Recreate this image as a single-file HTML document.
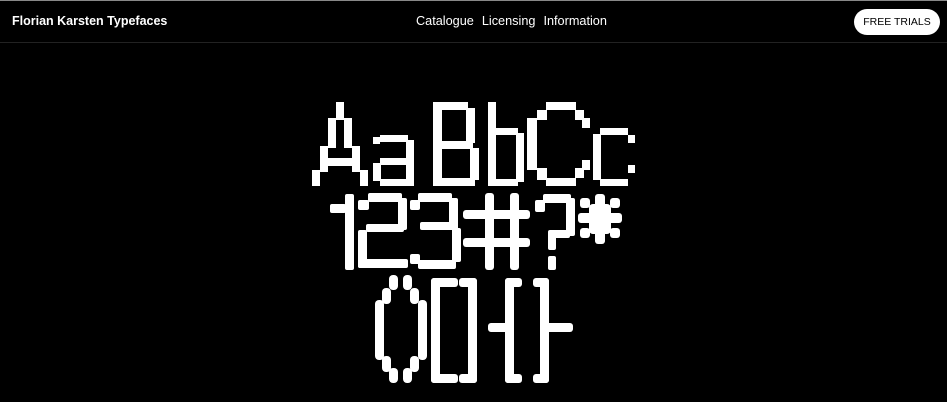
<!DOCTYPE html>
<html><head><style>
body{margin:0;width:947px;height:402px;background:#000;overflow:hidden;font-family:"Liberation Sans",sans-serif;color:#fff;position:relative}
.top{position:absolute;top:0;left:0;width:947px;height:1px;background:#888}
.nav{position:absolute;top:1px;left:0;width:947px;height:41px;border-bottom:1px solid #222}
.t{position:absolute;left:12px;top:13px;font-weight:bold;font-size:12.5px}
.l{position:absolute;left:416px;top:13px;font-size:12.7px}
.l span{margin-right:8px}
.b{position:absolute;left:854px;top:8px;width:86px;height:26px;border-radius:13px;background:#fff;color:#000;font-size:10.5px;text-align:center;line-height:26px}
svg{position:absolute;left:0;top:0}
</style></head><body>
<div class="top"></div>
<div class="nav"><div class="t">Florian Karsten Typefaces</div>
<div class="l"><span>Catalogue</span><span>Licensing</span><span>Information</span></div>
<div class="b">FREE TRIALS</div></div>
<svg width="947" height="402" fill="#fff">
<rect x="336" y="102" width="8" height="18"/><rect x="328" y="118" width="8" height="30"/><rect x="344" y="118" width="8" height="30"/>
<rect x="320" y="146" width="8" height="26"/><rect x="352" y="146" width="8" height="26"/><rect x="320" y="158" width="40" height="8"/>
<rect x="312" y="170" width="8" height="16"/><rect x="360" y="170" width="8" height="16"/>
<rect x="380" y="135" width="28" height="7"/><rect x="373" y="137" width="7" height="7"/><rect x="406" y="140" width="8" height="46"/>
<rect x="380" y="158" width="28" height="7"/><rect x="373" y="163" width="8" height="18"/><rect x="380" y="179" width="34" height="7"/>
<rect x="433" y="102" width="9" height="84"/><rect x="433" y="102" width="35" height="8"/><rect x="433" y="141" width="40" height="8"/><rect x="433" y="178" width="42" height="8"/>
<rect x="466" y="108" width="9" height="35"/><rect x="470" y="148" width="9" height="32"/>
<rect x="488" y="102" width="8" height="84"/><rect x="496" y="128" width="22" height="7"/><rect x="516" y="133" width="8" height="49"/><rect x="496" y="179" width="22" height="7"/>
<rect x="546" y="102" width="30" height="8"/><rect x="537" y="110" width="10" height="10"/><rect x="527" y="118" width="10" height="52"/><rect x="537" y="168" width="10" height="12"/><rect x="546" y="178" width="30" height="8"/>
<rect x="575" y="110" width="9" height="10"/><rect x="582" y="118" width="8" height="10"/><rect x="575" y="168" width="9" height="10"/><rect x="582" y="160" width="8" height="10"/>
<rect x="600" y="128" width="28" height="7"/><rect x="593" y="134" width="8" height="46"/><rect x="600" y="179" width="28" height="7"/><rect x="628" y="135" width="7" height="8"/><rect x="628" y="165" width="7" height="8"/>
<g>
<rect x="345" y="194" width="9" height="76" rx="2"/><rect x="330" y="204" width="16" height="9" rx="2"/>
<rect x="368" y="193" width="34" height="9" rx="2"/><rect x="358" y="200" width="11" height="10" rx="2"/><rect x="398" y="198" width="9" height="32" rx="2"/>
<rect x="366" y="224" width="38" height="8" rx="2"/><rect x="358" y="230" width="9" height="38" rx="2"/><rect x="358" y="259" width="50" height="9" rx="2"/>
<rect x="418" y="193" width="34" height="9" rx="2"/><rect x="410" y="200" width="10" height="10" rx="2"/><rect x="449" y="198" width="9" height="32" rx="2"/>
<rect x="420" y="222" width="34" height="8" rx="2"/><rect x="452" y="228" width="9" height="34" rx="2"/><rect x="418" y="260" width="38" height="9" rx="2"/><rect x="410" y="254" width="10" height="10" rx="2"/>
<rect x="485" y="193" width="9" height="77" rx="3"/><rect x="510" y="193" width="9" height="77" rx="3"/><rect x="463" y="210" width="67" height="9" rx="3"/><rect x="463" y="238" width="67" height="9" rx="3"/>
<rect x="543" y="194" width="28" height="9" rx="2"/><rect x="535" y="200" width="10" height="12" rx="2"/><rect x="566" y="198" width="9" height="38" rx="2"/><rect x="548" y="230" width="22" height="8" rx="2"/>
<rect x="548" y="234" width="8" height="16" rx="2"/><rect x="548" y="256" width="8" height="14" rx="2"/>
<rect x="589" y="204" width="22" height="30" rx="4"/><rect x="578" y="213" width="44" height="10" rx="3"/><rect x="595" y="194" width="10" height="50" rx="3"/>
<rect x="580" y="198" width="10" height="10" rx="3"/><rect x="610" y="198" width="10" height="10" rx="3"/><rect x="580" y="228" width="10" height="10" rx="3"/><rect x="610" y="228" width="10" height="10" rx="3"/>
</g>
<g>
<rect x="389" y="275" width="9" height="15" rx="4"/><rect x="382" y="288" width="9" height="16" rx="4"/><rect x="375" y="300" width="9" height="60" rx="4"/><rect x="382" y="356" width="9" height="16" rx="4"/><rect x="389" y="368" width="9" height="15" rx="4"/>
<rect x="403" y="275" width="9" height="15" rx="4"/><rect x="410" y="288" width="9" height="16" rx="4"/><rect x="418" y="300" width="9" height="60" rx="4"/><rect x="410" y="356" width="9" height="16" rx="4"/><rect x="403" y="368" width="9" height="15" rx="4"/>
<rect x="431" y="278" width="9" height="105" rx="3"/><rect x="431" y="278" width="27" height="9" rx="3"/><rect x="431" y="374" width="27" height="9" rx="3"/>
<rect x="468" y="278" width="9" height="105" rx="3"/><rect x="459" y="278" width="18" height="9" rx="3"/><rect x="459" y="374" width="18" height="9" rx="3"/>
<rect x="505" y="278" width="17" height="9" rx="3"/><rect x="505" y="278" width="9" height="105" rx="3"/><rect x="488" y="323" width="22" height="9" rx="3"/><rect x="505" y="374" width="17" height="9" rx="3"/>
<rect x="533" y="278" width="16" height="9" rx="3"/><rect x="540" y="278" width="9" height="105" rx="3"/><rect x="543" y="323" width="30" height="9" rx="3"/><rect x="533" y="374" width="16" height="9" rx="3"/>
</g>
</svg>
</body></html>
